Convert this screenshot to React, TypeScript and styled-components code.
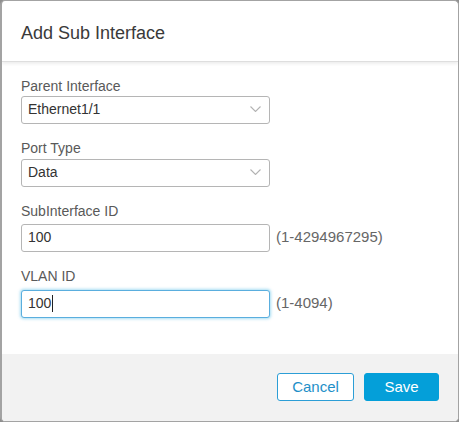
import styled, { createGlobalStyle } from 'styled-components';

const GlobalStyle = createGlobalStyle`
  html, body {
    margin: 0;
    padding: 0;
    background: #8e8e8e;
  }
  body {
    font-family: "Liberation Sans", Arial, sans-serif;
  }
`;

const Dialog = styled.div`
  box-sizing: border-box;
  width: 459px;
  height: 422px;
  background: #ffffff;
  border: 1px solid #a3a3a3;
  border-left-width: 2px;
  border-radius: 5px;
  overflow: hidden;
  display: flex;
  flex-direction: column;
`;

const Header = styled.div`
  padding: 21px 19px 17px;
  border-bottom: 1px solid #dedede;
  box-shadow: 0 2px 3px rgba(0, 0, 0, 0.07);
  position: relative;
  z-index: 1;
`;

const Title = styled.h2`
  margin: 0;
  font-size: 18px;
  line-height: 22px;
  font-weight: normal;
  color: #3a3a3a;
`;

const Body = styled.div`
  flex: 1;
  padding: 15px 19px 0;
  display: flex;
  flex-direction: column;
  gap: 15px;
`;

const Group = styled.div<{ $gap: number }>`
  display: flex;
  flex-direction: column;
  gap: ${(p) => p.$gap}px;
`;

const Label = styled.label`
  font-size: 14px;
  line-height: 18px;
  color: #595959;
`;

const Row = styled.div`
  display: flex;
  align-items: center;
  gap: 6px;
`;

const Select = styled.div`
  box-sizing: border-box;
  width: 249px;
  height: 28px;
  border: 1px solid #b5b5b5;
  border-radius: 3px;
  padding: 0 8px 2px 6px;
  display: flex;
  align-items: center;
  justify-content: space-between;
  font-size: 14px;
  color: #333333;
  background: #fff;
`;

const TextBox = styled.div<{ $focused?: boolean }>`
  box-sizing: border-box;
  width: 249px;
  height: 28px;
  border: 1px solid ${(p) => (p.$focused ? '#5aaede' : '#b5b5b5')};
  border-radius: 3px;
  padding: 0 6px 2px;
  display: flex;
  align-items: center;
  font-size: 14px;
  color: #333333;
  background: #fff;
  box-shadow: ${(p) => (p.$focused ? '0 0 3px 1px rgba(4, 159, 217, 0.35)' : 'none')};
`;

const Caret = styled.span`
  display: inline-block;
  width: 1px;
  height: 17px;
  margin-left: 1px;
  background: #222;
`;

const Hint = styled.span`
  font-size: 15px;
  color: #666666;
  padding-bottom: 3px;
`;

const Footer = styled.div`
  height: 66px;
  background: #f2f2f2;
  display: flex;
  align-items: center;
  justify-content: flex-end;
  gap: 10px;
  padding: 0 19px 1px 0;
`;

const Button = styled.button<{ $primary?: boolean }>`
  box-sizing: border-box;
  height: 28px;
  border-radius: 3px;
  font-family: inherit;
  font-size: 15px;
  padding: 0 0 1px;
  cursor: pointer;
  border: 1px solid ${(p) => (p.$primary ? '#049fd9' : '#2c9ed6')};
  background: ${(p) => (p.$primary ? '#049fd9' : '#ffffff')};
  color: ${(p) => (p.$primary ? '#ffffff' : '#1e8fc8')};
  width: ${(p) => (p.$primary ? 75 : 77)}px;
`;

const Chevron = () => (
  <svg width="11" height="6" viewBox="0 0 11 6" fill="none">
    <path d="M0.5 0.5l5 5 5-5" stroke="#b3b3b3" strokeWidth="1.1" />
  </svg>
);

export default function App() {
  return (
    <>
      <GlobalStyle />
      <Dialog>
        <Header>
          <Title>Add Sub Interface</Title>
        </Header>
        <Body>
          <Group $gap={1}>
            <Label>Parent Interface</Label>
            <Select>
              <span>Ethernet1/1</span>
              <Chevron />
            </Select>
          </Group>
          <Group $gap={2}>
            <Label>Port Type</Label>
            <Select>
              <span>Data</span>
              <Chevron />
            </Select>
          </Group>
          <Group $gap={4}>
            <Label>SubInterface ID</Label>
            <Row>
              <TextBox>100</TextBox>
              <Hint>(1-4294967295)</Hint>
            </Row>
          </Group>
          <Group $gap={5}>
            <Label>VLAN ID</Label>
            <Row>
              <TextBox $focused>
                100
                <Caret />
              </TextBox>
              <Hint>(1-4094)</Hint>
            </Row>
          </Group>
        </Body>
        <Footer>
          <Button>Cancel</Button>
          <Button $primary>Save</Button>
        </Footer>
      </Dialog>
    </>
  );
}
